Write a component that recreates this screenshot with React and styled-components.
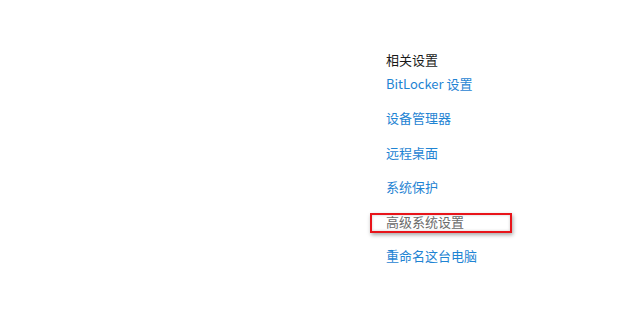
import styled, { createGlobalStyle } from 'styled-components';

const GlobalStyle = createGlobalStyle`
  html, body {
    margin: 0;
    padding: 0;
    background: #ffffff;
  }
  body {
    font-family: 'Noto Sans CJK SC', 'Noto Sans', sans-serif;
  }
`;

const Page = styled.div`
  width: 620px;
  height: 309px;
  box-sizing: border-box;
  padding: 50px 0 0 386px;
  background: #ffffff;
`;

const Section = styled.section`
  display: flex;
  flex-direction: column;
  align-items: flex-start;
`;

const Heading = styled.h3`
  margin: 0 0 4px;
  font-size: 13px;
  line-height: 20px;
  font-weight: 400;
  color: #1a1a1a;
`;

const LinkList = styled.div`
  display: flex;
  flex-direction: column;
  align-items: flex-start;
  gap: 14.4px;
`;

const SettingLink = styled.a`
  position: relative;
  font-size: 13px;
  line-height: 20px;
  color: ${props => props.highlighted ? '#6b6b6b' : '#1f84d3'};
  text-decoration: none;
  cursor: pointer;
  white-space: nowrap;

  ${props => props.highlighted && `
    &::after {
      content: '';
      position: absolute;
      left: -16px;
      top: 1.5px;
      box-sizing: border-box;
      width: 142px;
      height: 20px;
      border: 2px solid #e8141a;
      box-shadow: 1px 2px 4px rgba(0, 0, 0, 0.35), inset 0 0 3px rgba(0, 0, 0, 0.2);
      pointer-events: none;
    }
  `}
`;

const links = [
  { label: 'BitLocker 设置' },
  { label: '设备管理器' },
  { label: '远程桌面' },
  { label: '系统保护' },
  { label: '高级系统设置', highlighted: true },
  { label: '重命名这台电脑' },
];

export default function App() {
  return (
    <>
      <GlobalStyle />
      <Page>
        <Section>
          <Heading>相关设置</Heading>
          <LinkList>
            {links.map(link => (
              <SettingLink key={link.label} highlighted={link.highlighted}>
                {link.label}
              </SettingLink>
            ))}
          </LinkList>
        </Section>
      </Page>
    </>
  );
}
